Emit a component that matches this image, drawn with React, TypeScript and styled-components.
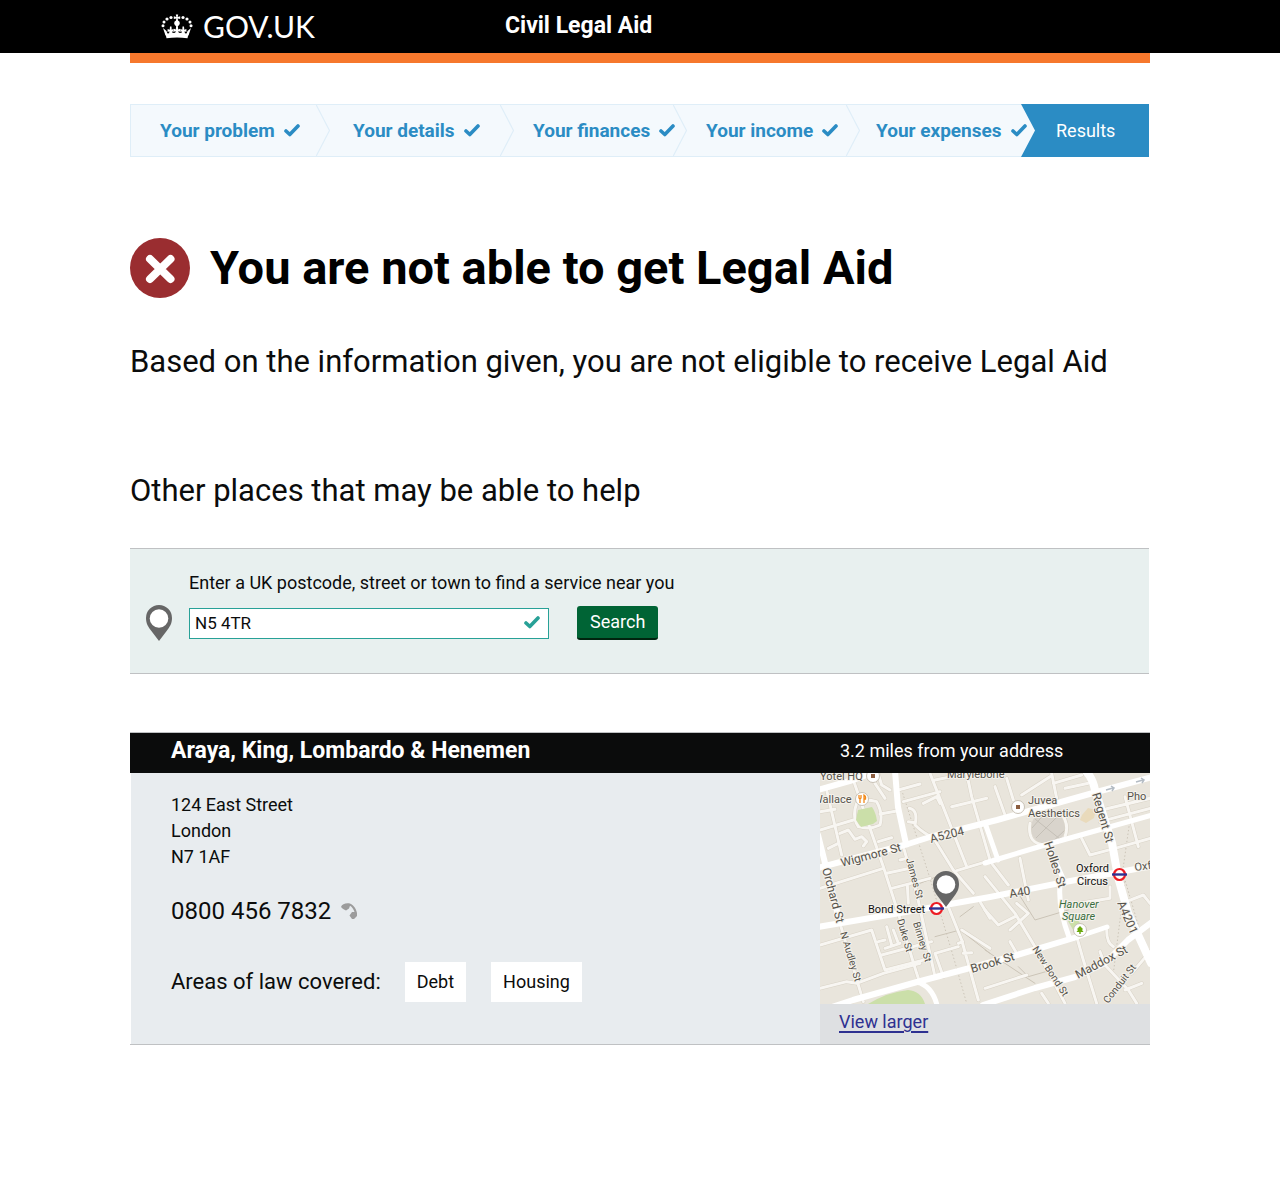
import React from "react";
import styled, { createGlobalStyle } from "styled-components";

const GlobalStyle = createGlobalStyle`
  *, *::before, *::after { box-sizing: border-box; }
  body {
    margin: 0;
    background: #fff;
    color: #0b0c0c;
    font-family: Roboto, "Noto Sans", sans-serif;
    font-size: 18px;
    line-height: 26px;
  }
  h1, h2, h3, p, ol, ul { margin: 0; padding: 0; }
  svg { display: block; flex: none; }
`;

const Container = styled.div`
  max-width: 1020px;
  margin: 0 auto;
`;

const Header = styled.header`
  background: #000;
  color: #fff;
`;

const HeaderRow = styled(Container)`
  display: grid;
  grid-template-columns: 375px 1fr;
  height: 53px;
`;

const LogoLink = styled.a`
  display: flex;
  align-items: center;
  gap: 10px;
  padding-left: 31px;
  color: #fff;
  font-family: Lato, sans-serif;
  font-size: 30px;
  line-height: 53px;
  text-decoration: none;
`;

const ServiceName = styled.p`
  font-size: 23px;
  font-weight: 700;
  line-height: 51px;
`;

const Accent = styled(Container)`
  height: 10px;
  background: #f6782d;
`;

const Steps = styled.ol`
  display: flex;
  height: 53px;
  margin: 41px 1px 0 0;
  background: #f4f9fd;
  border: solid #dfeef8;
  border-width: 1px 0 1px 1px;
  list-style: none;
`;

const Step = styled.li<{ $grow: number; $current?: boolean }>`
  display: flex;
  flex: ${(p) => p.$grow} 1 0;
  align-items: center;
  gap: 9px;
  min-width: 0;
  margin: -1px 0;
  color: ${(p) => (p.$current ? "#fff" : "#2b8cc4")};
  background: ${(p) => (p.$current ? "linear-gradient(to right, transparent 14px, #2b8cc4 14px)" : "none")};
  font-size: ${(p) => (p.$current ? 18 : 19)}px;
  font-weight: ${(p) => (p.$current ? 400 : 700)};
  white-space: nowrap;
`;

const StepLabel = styled.span<{ $indent: number }>`
  padding-left: ${(p) => p.$indent}px;
`;

const ResultHeading = styled.div`
  display: flex;
  align-items: center;
  gap: 20px;
  margin-top: 81px;
`;

const Title = styled.h1`
  color: #000;
  font-size: 47px;
  font-weight: 700;
  line-height: 60px;
`;

const Lead = styled.p`
  margin-top: 44px;
  font-size: 31px;
  line-height: 40px;
`;

const SectionTitle = styled.h2`
  margin-top: 89px;
  font-size: 31px;
  font-weight: 400;
  line-height: 40px;
`;

const SearchPanel = styled.form`
  display: grid;
  grid-template-columns: 27px 1fr;
  column-gap: 16px;
  row-gap: 9px;
  margin: 37px 1px 0 0;
  padding: 21px 16px 32px;
  background: #e8f0ef;
  border-top: 1px solid #bfc1c3;
  border-bottom: 1px solid #bfc1c3;
`;

const SearchLabel = styled.label`
  grid-column: 2;
`;

const SearchRow = styled.div`
  display: flex;
  align-items: center;
  gap: 28px;
`;

const Field = styled.div`
  display: flex;
  align-items: center;
  width: 360px;
  height: 31px;
  padding-right: 8px;
  background: #fff;
  border: 1px solid #28a197;
`;

const PostcodeInput = styled.input`
  flex: 1;
  min-width: 0;
  padding: 0 5px;
  border: 0;
  background: none;
  color: #0b0c0c;
  font: inherit;
  font-size: 17px;
`;

const SearchButton = styled.button`
  height: 34px;
  padding: 0 13px;
  border: 0;
  border-bottom: 2px solid #00240f;
  border-radius: 3px;
  background: #006435;
  color: #fff;
  font: inherit;
`;

const Card = styled.article`
  margin-top: 58px;
  border-top: 1px solid #bfc1c3;
  border-bottom: 1px solid #bfc1c3;
`;

const CardHeader = styled.header`
  display: grid;
  grid-template-columns: 1fr 330px;
  background: #0b0c0c;
  color: #fff;
  line-height: 36px;
  height: 40px;
`;

const FirmName = styled.h3`
  padding-left: 41px;
  font-size: 23px;
  font-weight: 700;
`;

const Distance = styled.p`
  padding-left: 20px;
`;

const CardBody = styled.div`
  display: grid;
  grid-template-columns: 1fr 330px;
`;

const Details = styled.div`
  margin-left: 1px;
  padding: 19px 40px 0;
  background: #e8ecef;
`;

const Address = styled.address`
  font-style: normal;
`;

const Phone = styled.p`
  display: flex;
  align-items: center;
  gap: 10px;
  margin-top: 28px;
  font-size: 24px;
`;

const Areas = styled.div`
  display: flex;
  align-items: center;
  gap: 24px;
  margin-top: 38px;
`;

const AreasLabel = styled.p`
  font-size: 22px;
`;

const TagList = styled.ul`
  display: flex;
  gap: 25px;
  list-style: none;
`;

const Tag = styled.li`
  padding: 7px 12px;
  background: #fff;
`;

const MapColumn = styled.div`
  background: #dee0e2;
`;

const MapLink = styled.a`
  display: block;
  width: fit-content;
  margin-left: 19px;
  color: #2e3191;
  line-height: 36px;
  height: 40px;
  text-decoration-thickness: 2px;
  text-underline-offset: 3px;
`;

const Crown = () => (
  <svg width="32" height="25" viewBox="0 0 32 25" fill="#fff" aria-hidden="true">
    <path d="M4.500 19.800Q16 17.800 27.500 19.800L26.500 24.300Q16 22.800 5.500 24.300Z" />
    <path d="M2 14 5.500 17 7 21 4.500 21.500ZM30 14 26.500 17 25 21 27.500 21.500Z" />
    <path d="M9 12.500h1.500l.2 3.200 2-1v3.300l-1.500-.7.5 2.700H8l.4-2.700-1.800.7v-3l2.100.7ZM23 12.500h-1.500l-.2 3.200-2-1v3.300l1.500-.7-.5 2.700H24l-.4-2.700 1.800.7v-3l-2.100.7Z" />
    <path d="M15.200 11.500h1.600l.4 4 1.800-.8v3l-1.700-.6.7 2.400h-4l.7-2.400-1.700.6v-3l1.800.8Z" />
    <path d="M14.800.5h2.400l-.5 2.400 2.500-.6v2.800l-2.500-.5.3 2a2.900 2.900 0 0 1-1 5.600 2.900 2.900 0 0 1-1-5.600l.3-2-2.500.5V2.300l2.500.6Z" />
    <circle cx="10" cy="3.500" r="1.600" /><circle cx="6" cy="5" r="1.600" />
    <circle cx="3" cy="8" r="1.500" /><circle cx="2" cy="11.800" r="1.500" />
    <circle cx="22" cy="3.500" r="1.600" /><circle cx="26" cy="5" r="1.600" />
    <circle cx="29" cy="8" r="1.500" /><circle cx="30" cy="11.800" r="1.500" />
  </svg>
);

const Tick = ({ color }: { color: string }) => (
  <svg width="16" height="14" viewBox="0 0 16 14" aria-hidden="true">
    <path d="M2 7 5.800 10.500 14 2" fill="none" stroke={color} strokeWidth="3.600" strokeLinecap="round" strokeLinejoin="round" />
  </svg>
);

const Chevron = ({ solid }: { solid?: boolean }) => (
  <svg width="14" height="53" viewBox="0 0 14 53" aria-hidden="true">
    {solid ? (
      <path d="M0 0H14V53H0L14 26.500Z" fill="#2b8cc4" />
    ) : (
      <path d="M0 .5 13.500 26.500 0 52.500" fill="none" stroke="#dfeef8" strokeWidth="1.200" />
    )}
  </svg>
);

const Cross = () => (
  <svg width="60" height="60" viewBox="0 0 60 60" aria-hidden="true">
    <circle cx="30" cy="30" r="30" fill="#9a2d30" />
    <path d="M20 21 40.500 41M40.500 21 20 41" stroke="#fff" strokeWidth="8" strokeLinecap="round" />
  </svg>
);

const pinPath = "M13 0a13 13 0 0 0-13 13c0 6 2.500 9 5 12.500L13 36l8-10.500C23.500 22 26 19 26 13A13 13 0 0 0 13 0Z";

const Pin = () => (
  <svg width="26" height="36" viewBox="0 0 26 36" aria-hidden="true">
    <path d={pinPath} fill="#666" />
    <circle cx="13" cy="13.500" r="9.300" fill="#fff" />
  </svg>
);

const PhoneIcon = () => (
  <svg width="17" height="17" viewBox="0 0 17 17" fill="#9c9c9c" aria-hidden="true">
    <path d="M0 4C1 1 4 0 8 .3 12 1.500 15 5 16 10V13L13 16H11L8.500 12.500 11 9H13.500C12.500 6 11 4 9 2.800L8 5.500 5 7.500 3 6.500 1.500 5.500Z" />
  </svg>
);

const westMinor = [
  "M0 180 100 150M20 60 65 255M0 125 45 118M100 30 150 175 190 290 235 430 290 610 300 640",
  "M110 100Q95 140 115 170 150 180 180 165 190 130 170 95 130 85 110 100M180 132 235 122M60 190 85 180 105 208 125 200 140 215 130 228M25 235 55 220M175 215 215 203M150 15 165 40 195 85M175 12 185 45 210 60M235 60 300 42",
  "M250 95 360 65M330 10 440 290M345 30 420 15M310 100 350 80 360 100M395 110 500 85M440 10 455 80 510 270M268 115Q295 120 285 165 310 190 340 203L400 300 460 370M265 155 285 158M410 302 510 272",
  "M0 355 190 295M200 310 270 295M215 355 330 325M240 270 260 265M262 345 265 400M0 525 155 480 195 600 330 565M200 470 215 525M220 480 235 520M195 535 240 520M185 555 335 515M175 515 195 510",
  "M250 230 290 370 345 620M0 655 80 635 110 640 190 610 300 580M60 460 130 695M385 410 425 510 475 690M345 550 370 620M345 550 415 530M430 550 455 548M415 520 428 515M425 480 510 535M480 395 510 445",
];
const eastMinor = [
  "M30 50 60 135M65 25 85 90M200 10 215 85M205 40 290 15M110 75 195 20M240 55 310 40M135 160Q125 225 185 225M225 125Q255 160 240 200M350 120 495 85M345 155 495 115M420 80 460 230M290 205 315 255 390 235 495 205",
  "M20 280 70 345M105 265 130 390M0 320 90 430 150 530 240 700M0 420 40 465 90 440M95 400 130 430 75 480M375 350 375 385 250 405",
  "M410 400 475 375 495 400M275 500 295 570 335 700M365 480Q365 520 385 530M345 545 360 585 430 660 455 700M75 515 95 550M0 655 125 615M440 610 495 545M420 660 470 640M170 670 190 700",
];

type LabelProps = { x: number; y: number; r?: number; size?: number; children: string };
const StreetLabel = ({ x, y, r = 0, size = 11, children }: LabelProps) => (
  <text transform={`translate(${x} ${y}) rotate(${r})`} fontSize={size}>
    {children}
  </text>
);

const Tube = ({ x, y }: { x: number; y: number }) => (
  <g transform={`translate(${x} ${y})`}>
    <circle r="5.500" fill="#fff" stroke="#ed1c24" strokeWidth="2.200" />
    <path d="M-7.500 0H7.500" stroke="#2e3191" strokeWidth="2.400" />
  </g>
);

const Poi = ({ x, y, children }: { x: number; y: number; children: React.ReactNode }) => (
  <g transform={`translate(${x} ${y})`}>
    <circle r="6.500" fill="#fff" stroke="#c9c2b6" strokeWidth="1" />
    {children}
  </g>
);

const MapSvg = styled.svg`
  width: 100%;
  height: auto;
  font-family: Roboto, sans-serif;
`;

const west = "translate(0 -3) scale(.33333)";
const east = "translate(165 -3) scale(.33333)";

const StreetMap = () => (
  <MapSvg viewBox="0 0 330 231" role="img" aria-label="Map of the area around Bond Street">
    <rect width="330" height="231" fill="#e9e5dc" />
    <path d="M262 42 268 35 276 37 274 45 266 50 260 47Z" fill="#e9dabb" />
    <circle cx="228" cy="55" r="17" fill="#d9d4cc" />
    <path d="M215 46 240 66M239 42 216 65M227 38 212 55M229 72 245 57" stroke="#c5c0b7" fill="none" />
    <g fill="none" strokeLinejoin="round" strokeLinecap="round">
      <g stroke="#d8d2c6">
        <g transform={west} strokeWidth="12">{westMinor.map((d) => <path key={d} d={d} />)}</g>
        <g transform={east} strokeWidth="12">{eastMinor.map((d) => <path key={d} d={d} />)}</g>
      </g>
      <g transform={west} stroke="#cbc4b7" strokeWidth="3">
        <path d="M245 60 330 325 400 560 440 700" strokeDasharray="2 9" />
        <path d="M300 340 355 318M345 500 420 480 510 550M400 450 425 520M420 440 460 410" />
      </g>
      <g transform={east} stroke="#cbc4b7" strokeWidth="3">
        <path d="M432 170 415 290M385 610 420 330 470 500" strokeDasharray="2 9" />
        <path d="M100 370 150 450 250 420M0 540 150 640M100 590 130 620 200 600" />
      </g>
      <g stroke="#f8f6f2">
        <g transform={west} strokeWidth="9">{westMinor.map((d) => <path key={d} d={d} />)}</g>
        <g transform={east} strokeWidth="9">{eastMinor.map((d) => <path key={d} d={d} />)}</g>
      </g>
    </g>
    <g fill="#cbdfa9">
      <path d="M38 37 52 34Q56 40 57 48L53 51 41 54 36 47Z" />
      <path d="M48 231Q68 219 88 217 101 218 105 231Z" />
      <path d="M248 148 256 145 264 155 256 162Z" />
    </g>
    <g fill="none" stroke="#fff" strokeLinejoin="round" strokeLinecap="round">
      <g strokeWidth="6">
        <path d="M-2 95 88 71 110 64 177 47 273 20 332 4M-2 154 80 140 170 124 245 109 332 93" />
        <path d="M75-2 78 34 86 71M-2 62 5 90 20 150M-2 17 33 7 52 0" />
        <path d="M0 238 33 227 97 209 150 195 197 182 257 164M163 232 215 215 255 204 285 190 308 167 332 149" />
      </g>
      <g strokeWidth="5">
        <path d="M165 90 225 72 332 42M165 50 178 87M228 72 245 110M240 112Q238 135 249 164M254 165 287 154M97 209Q112 213 117 232" />
      </g>
      <path d="M266-2Q273 6 275 17L292 70 298 104 308 140 331 190" strokeWidth="8" />
    </g>
    <path d="M286 17 293 15M291 13 294 15 292 18M316 9 323 7M321 5 324 7 322 10" stroke="#b4bcc4" strokeWidth="1.500" fill="none" />
    <g fill="#56524b" stroke="#f5f2ec" strokeWidth="2" paintOrder="stroke" strokeLinejoin="round">
      <StreetLabel x={0} y={7}>Yotel HQ</StreetLabel>
      <StreetLabel x={127} y={5}>Marylebone</StreetLabel>
      <StreetLabel x={-7} y={30}>Wallace</StreetLabel>
      <StreetLabel x={208} y={31}>Juvea</StreetLabel>
      <StreetLabel x={208} y={44}>Aesthetics</StreetLabel>
      <StreetLabel x={307} y={27}>Pho</StreetLabel>
      <StreetLabel x={22} y={94} r={-15} size={12}>Wigmore St</StreetLabel>
      <StreetLabel x={111} y={70} r={-14} size={12}>A5204</StreetLabel>
      <StreetLabel x={190} y={125} r={-10} size={12}>A40</StreetLabel>
      <StreetLabel x={315} y={98} r={-8}>Oxf</StreetLabel>
      <StreetLabel x={2} y={96} r={75} size={12}>Orchard St</StreetLabel>
      <StreetLabel x={86} y={86} r={75} size={10}>James St</StreetLabel>
      <StreetLabel x={77} y={147} r={74} size={10}>Duke St</StreetLabel>
      <StreetLabel x={93} y={150} r={73} size={10}>Binney St</StreetLabel>
      <StreetLabel x={20} y={160} r={73} size={10}>N Audley St</StreetLabel>
      <StreetLabel x={152} y={200} r={-17} size={12}>Brook St</StreetLabel>
      <StreetLabel x={212} y={176} r={57} size={10}>New Bond St</StreetLabel>
      <StreetLabel x={258} y={206} r={-28} size={12}>Maddox St</StreetLabel>
      <StreetLabel x={288} y={231} r={-52} size={10}>Conduit St</StreetLabel>
      <StreetLabel x={297} y={130} r={67} size={12}>A4201</StreetLabel>
      <StreetLabel x={272} y={21} r={74} size={12}>Regent St</StreetLabel>
      <StreetLabel x={224} y={70} r={72} size={12}>Holles St</StreetLabel>
    </g>
    <g fill="#111" stroke="#f5f2ec" strokeWidth="2" paintOrder="stroke" fontSize="11">
      <text x="48" y="140">Bond Street</text>
      <text x="256" y="99">Oxford</text>
      <text x="257" y="112">Circus</text>
    </g>
    <g fill="#3a6e3f" stroke="#f5f2ec" strokeWidth="2" paintOrder="stroke" fontSize="11" fontStyle="italic">
      <text x="239" y="135">Hanover</text>
      <text x="242" y="147">Square</text>
    </g>
    <Poi x={53} y={3}><rect x="-2" y="-2" width="4" height="4" fill="#8b5d3f" /></Poi>
    <Poi x={198} y={34}><rect x="-2" y="-2" width="4" height="4" fill="#8b5d3f" /></Poi>
    <Poi x={42} y={26}>
      <path d="M-3-4V-1L-2 0V4M-1-4V-1L-2 0M2 4V-4Q4-3 3.500 0H2" stroke="#f28a1c" strokeWidth="1.300" fill="none" />
    </Poi>
    <Poi x={260} y={157}>
      <path d="M0-4 3-1 2 0 3.500 2H.7V4H-.7V2H-3.500L-2 0-3-1Z" fill="#6aa80c" />
    </Poi>
    <Tube x={116.500} y={135.500} />
    <Tube x={299.500} y={101.500} />
    <g transform="translate(113 98)">
      <path d={pinPath} fill="#666" />
      <circle cx="13" cy="13.500" r="9.300" fill="#fff" />
    </g>
  </MapSvg>
);

const doneSteps = [
  { label: "Your problem", grow: 185, indent: 29 },
  { label: "Your details", grow: 184, indent: 14 },
  { label: "Your finances", grow: 173, indent: 10 },
  { label: "Your income", grow: 173, indent: 10 },
  { label: "Your expenses", grow: 175, indent: 7 },
];

export default function App() {
  return (
    <>
      <GlobalStyle />
      <Header>
        <HeaderRow>
          <LogoLink href="#">
            <Crown />
            GOV.UK
          </LogoLink>
          <ServiceName>Civil Legal Aid</ServiceName>
        </HeaderRow>
      </Header>
      <Accent />
      <Container as="main">
        <Steps>
          {doneSteps.map((s, i) => (
            <Step key={s.label} $grow={s.grow}>
              {i > 0 && <Chevron />}
              <StepLabel $indent={s.indent}>{s.label}</StepLabel>
              <Tick color="#2b8cc4" />
            </Step>
          ))}
          <Step $grow={128} $current aria-current="step">
            <Chevron solid />
            <StepLabel $indent={12}>Results</StepLabel>
          </Step>
        </Steps>

        <ResultHeading>
          <Cross />
          <Title>You are not able to get Legal Aid</Title>
        </ResultHeading>
        <Lead>Based on the information given, you are not eligible to receive Legal Aid</Lead>

        <SectionTitle>Other places that may be able to help</SectionTitle>
        <SearchPanel onSubmit={(e) => e.preventDefault()}>
          <SearchLabel htmlFor="postcode">Enter a UK postcode, street or town to find a service near you</SearchLabel>
          <Pin />
          <SearchRow>
            <Field>
              <PostcodeInput id="postcode" type="text" defaultValue="N5 4TR" />
              <Tick color="#28a197" />
            </Field>
            <SearchButton type="submit">Search</SearchButton>
          </SearchRow>
        </SearchPanel>

        <Card>
          <CardHeader>
            <FirmName>Araya, King, Lombardo &amp; Henemen</FirmName>
            <Distance>3.2 miles from your address</Distance>
          </CardHeader>
          <CardBody>
            <Details>
              <Address>
                124 East Street
                <br />
                London
                <br />
                N7 1AF
              </Address>
              <Phone>
                0800 456 7832
                <PhoneIcon />
              </Phone>
              <Areas>
                <AreasLabel>Areas of law covered:</AreasLabel>
                <TagList>
                  <Tag>Debt</Tag>
                  <Tag>Housing</Tag>
                </TagList>
              </Areas>
            </Details>
            <MapColumn>
              <StreetMap />
              <MapLink href="#">View larger</MapLink>
            </MapColumn>
          </CardBody>
        </Card>
      </Container>
    </>
  );
}
